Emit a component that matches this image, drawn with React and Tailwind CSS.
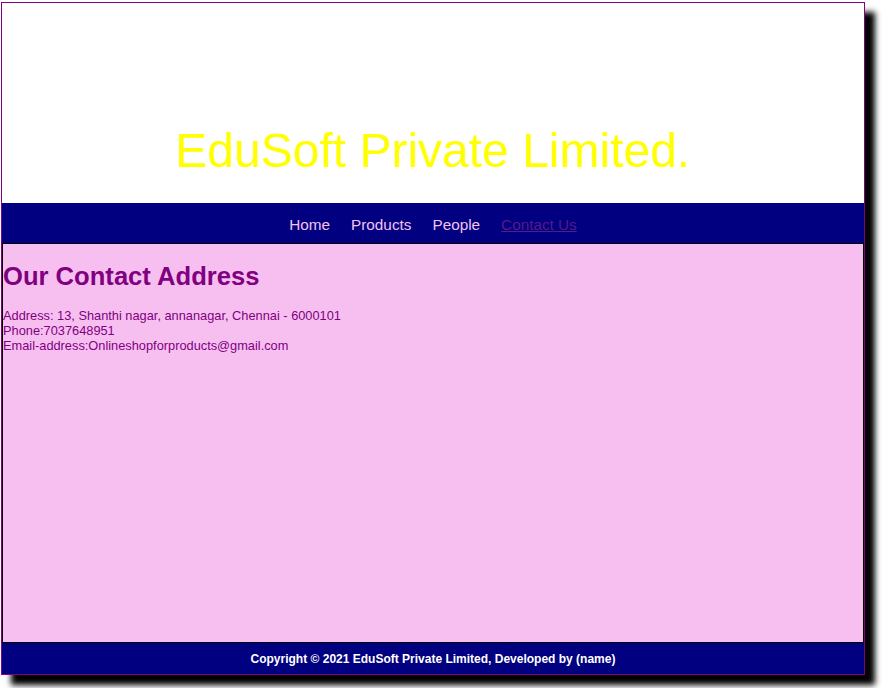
import React from 'react';

export default function App() {
  const links = ['Home', 'Products', 'People'];

  return (
    <div className="min-h-screen bg-white pt-[2px] pl-[1px] font-['Liberation_Sans',Arial,sans-serif]">
      <div className="w-[864px] h-[673px] border border-[#800080] shadow-[10px_10px_6px_#000] flex flex-col bg-white">
        {/* Header */}
        <header className="h-[200px] shrink-0 pt-[124px] text-center">
          <h1 className="text-[48px] leading-none text-[#ffff00]">EduSoft Private Limited.</h1>
        </header>

        {/* Nav */}
        <nav className="h-[40px] shrink-0 bg-[#000080] flex items-center justify-center gap-[21px] pt-[5px] text-[15.3px]">
          {links.map((l) => (
            <a key={l} className="text-[#f5c2f0]">{l}</a>
          ))}
          <a className="text-[#551a8b] underline">Contact Us</a>
        </nav>

        {/* Content */}
        <main className="flex-1 bg-[#f7bff0] border border-black text-[#800080]">
          <h2 className="text-[25.6px] font-bold mt-[17px] mb-[17px] leading-[30px]">Our Contact Address</h2>
          <p className="text-[12.8px] leading-[15px]">
            Address: 13, Shanthi nagar, annanagar, Chennai - 6000101<br />
            Phone:7037648951<br />
            Email-address:Onlineshopforproducts@gmail.com
          </p>
        </main>

        {/* Footer */}
        <footer className="h-[31px] shrink-0 bg-[#000080] flex items-center justify-center text-white text-xs font-bold">
          Copyright © 2021 EduSoft Private Limited, Developed by (name)
        </footer>
      </div>
    </div>
  );
}
